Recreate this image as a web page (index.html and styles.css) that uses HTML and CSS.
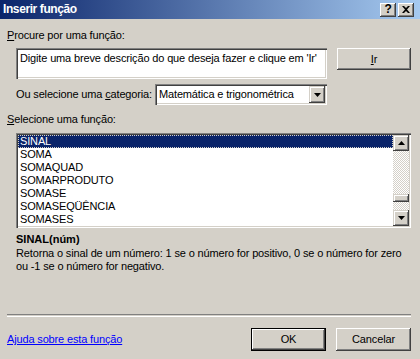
FILE: index.html
```html
<!DOCTYPE html>
<html lang="pt">
<head>
    <meta charset="UTF-8">
    <title>Inserir função</title>
    <link rel="stylesheet" href="styles.css">
</head>
<body>
<div class="dialog">
    <div class="titlebar">
        <span class="title">Inserir função</span>
        <div class="caption-buttons">
            <span class="cap-btn">?</span>
            <span class="cap-btn">
                <svg width="8" height="7" viewBox="0 0 8 7"><path d="M0 0h2l2 2 2-2h2L5 3.5 8 7H6L4 5 2 7H0l3-3.5z" fill="#000"/></svg>
            </span>
        </div>
    </div>

    <div class="content">
        <div class="label first"><u>P</u>rocure por uma função:</div>
        <div class="search-row">
            <div class="field search">Digite uma breve descrição do que deseja fazer e clique em 'Ir'</div>
            <div class="btn go"><u>I</u>r</div>
        </div>

        <div class="category-row">
            <span>Ou selecione uma <u>c</u>ategoria:</span>
            <div class="field select">
                <span class="select-text">Matemática e trigonométrica</span>
                <span class="arrow-btn">
                    <svg width="7" height="4" viewBox="0 0 7 4"><path d="M0 0h7L3.5 4z" fill="#000"/></svg>
                </span>
            </div>
        </div>

        <div class="label pick"><u>S</u>elecione uma função:</div>
        <div class="field listbox">
            <ul class="items">
                <li class="selected">SINAL</li>
                <li>SOMA</li>
                <li>SOMAQUAD</li>
                <li>SOMARPRODUTO</li>
                <li>SOMASE</li>
                <li>SOMASEQÜÊNCIA</li>
                <li>SOMASES</li>
            </ul>
            <div class="scrollbar">
                <span class="arrow-btn">
                    <svg width="7" height="4" viewBox="0 0 7 4"><path d="M0 4h7L3.5 0z" fill="#000"/></svg>
                </span>
                <div class="track">
                    <span class="thumb"></span>
                </div>
                <span class="arrow-btn">
                    <svg width="7" height="4" viewBox="0 0 7 4"><path d="M0 0h7L3.5 4z" fill="#000"/></svg>
                </span>
            </div>
        </div>

        <div class="fn-sig">SINAL(núm)</div>
        <p class="fn-desc">Retorna o sinal de um número: 1 se o número for positivo, 0 se o número for zero ou -1 se o número for negativo.</p>
    </div>

    <div class="separator"></div>

    <div class="footer">
        <a class="help" href="#">Ajuda sobre esta função</a>
        <div class="btn default">OK</div>
        <div class="btn">Cancelar</div>
    </div>
</div>
</body>
</html>
```

FILE: styles.css
```css
/* classic windows dialog look */
body {
    margin: 0;
    font-family: "Liberation Sans", Arial, sans-serif;
    font-size: 11px;
    line-height: 13px;
    letter-spacing: -0.15px;
    color: #000;
}
.dialog {
    width: 420px;
    height: 359px;
    background: #d4d0c8;
    display: flex;
    flex-direction: column;
}
u {
    text-decoration: underline;
    text-underline-offset: 1px;
}

/* title bar */
.titlebar {
    height: 19px;
    display: flex;
    align-items: center;
    justify-content: space-between;
    padding: 0 6px 0 3px;
    background: linear-gradient(to right, #0a246a, #a6caf0);
}
.title {
    color: #fff;
    font-weight: bold;
    font-size: 12px;
    letter-spacing: -0.4px;
}
.caption-buttons {
    display: flex;
    gap: 2px;
}
.cap-btn {
    width: 16px;
    height: 14px;
    box-sizing: border-box;
    background: #d4d0c8;
    display: flex;
    align-items: center;
    justify-content: center;
    font-weight: bold;
    font-size: 12px;
    box-shadow: inset -1px -1px #404040, inset 1px 1px #fff, inset -2px -2px #808080;
}

/* raised / sunken helpers */
.btn {
    box-sizing: border-box;
    width: 75px;
    height: 23px;
    display: flex;
    align-items: center;
    justify-content: center;
    background: #d4d0c8;
    box-shadow: inset -1px -1px #404040, inset 1px 1px #fff, inset -2px -2px #808080;
}
.btn.default {
    border: 1px solid #000;
}
.field {
    box-sizing: border-box;
    background: #fff;
    box-shadow: inset 1px 1px #808080, inset 2px 2px #404040, inset -1px -1px #fff, inset -2px -2px #d4d0c8;
}
.arrow-btn {
    width: 16px;
    height: 16px;
    box-sizing: border-box;
    flex-shrink: 0;
    display: flex;
    align-items: center;
    justify-content: center;
    background: #d4d0c8;
    box-shadow: inset -1px -1px #404040, inset 1px 1px #d4d0c8, inset 2px 2px #fff, inset -2px -2px #808080;
}

/* main area */
.content {
    flex: 1;
    padding: 0 9px 0 7px;
}
.label.first {
    margin-top: 10px;
}
.search-row {
    display: flex;
    align-items: flex-start;
    margin-top: 6px;
    padding-left: 9px;
}
.search {
    width: 311px;
    height: 31px;
    padding: 4px 4px 0;
    white-space: nowrap;
}
.btn.go {
    width: 74px;
    height: 22px;
    margin-left: 10px;
}
.category-row {
    width: 311px;
    display: flex;
    align-items: center;
    justify-content: space-between;
    margin-top: 5px;
    margin-left: 9px;
}
.select {
    width: 172px;
    height: 21px;
    display: flex;
    align-items: center;
    justify-content: space-between;
    padding: 2px;
}
.select-text {
    padding-left: 2px;
}
.select .arrow-btn {
    height: 17px;
}
.label.pick {
    margin-top: 8px;
}
.listbox {
    margin: 7px 0 0 9px;
    height: 95px;
    padding: 2px;
    display: flex;
}
.items {
    list-style: none;
    margin: 0;
    padding: 0;
    flex: 1;
}
.items li {
    height: 13px;
    padding-left: 2px;
}
.items li.selected {
    background: #0a246a;
    color: #fff;
    outline: 1px dotted #d4d0c8;
    outline-offset: -1px;
}
.scrollbar {
    width: 16px;
    display: flex;
    flex-direction: column;
}
.track {
    flex: 1;
    display: flex;
    flex-direction: column;
    justify-content: flex-end;
    padding-bottom: 8px;
    background: repeating-conic-gradient(#fff 0 25%, #d4d0c8 0 50%) 0 0 / 2px 2px;
}
.thumb {
    height: 8px;
    background: #d4d0c8;
    box-shadow: inset -1px -1px #404040, inset 1px 1px #d4d0c8, inset 2px 2px #fff, inset -2px -2px #808080;
}
.fn-sig {
    margin: 5px 0 0 9px;
    font-weight: bold;
    font-size: 11px;
    letter-spacing: 0;
}
.fn-desc {
    margin: 1px 0 0 9px;
}

/* bottom */
.separator {
    margin: 0 9px 0 7px;
    height: 1px;
    border-top: 1px solid #808080;
    border-bottom: 1px solid #fff;
}
.footer {
    display: flex;
    align-items: center;
    padding: 11px 9px 8px 7px;
}
.help {
    color: #0000ff;
    text-decoration: underline;
    margin-right: auto;
}
.footer .btn + .btn {
    margin-left: 10px;
}
```
